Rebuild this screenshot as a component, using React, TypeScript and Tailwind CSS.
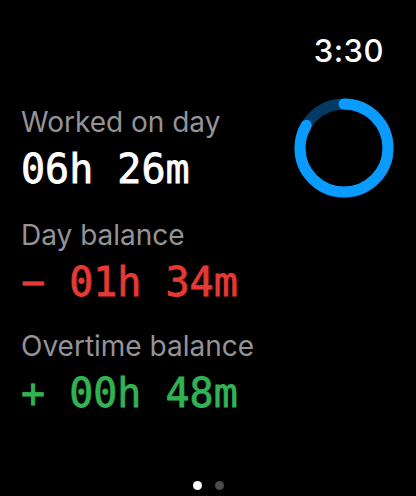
import React from "react";

function Ring() {
  const r = 44;
  const c = 2 * Math.PI * r;
  const p = 0.835;
  return (
    <svg width="100" height="100" viewBox="0 0 100 100">
      <circle cx="50" cy="50" r={r} fill="none" stroke="#053a63" strokeWidth="11" />
      <circle
        cx="50"
        cy="50"
        r={r}
        fill="none"
        stroke="#0a9bff"
        strokeWidth="11"
        strokeLinecap="round"
        strokeDasharray={`${c * p} ${c}`}
        transform="rotate(-90 50 50)"
      />
    </svg>
  );
}

export default function App() {
  const mono = { fontFamily: '"DejaVu Sans Mono", monospace' };
  return (
    <div
      className="w-[416px] h-[496px] bg-black text-white flex flex-col relative overflow-hidden"
      style={{ fontFamily: 'Inter, "Noto Sans", sans-serif' }}
    >
      <div className="flex justify-end pr-[32px] pt-[33px] h-[72px]">
        <span className="text-[31px] leading-[36px] font-medium tracking-[0.5px]">3:30</span>
      </div>
      <div className="flex">
        <div className="flex flex-col pl-[21px] flex-1">
          <div className="flex flex-col mt-[34px]">
            <span className="text-[28px] leading-[32px] text-[#939398]">Worked on day</span>
            <span className="text-[40px] leading-[44px] mt-[9px] [-webkit-text-stroke:0.8px_currentColor]" style={mono}>06h 26m</span>
          </div>
          <div className="flex flex-col mt-[28px]">
            <span className="text-[28px] leading-[32px] text-[#939398]">Day balance</span>
            <span className="text-[40px] leading-[44px] mt-[9px] text-[#e53935] [-webkit-text-stroke:0.8px_currentColor]" style={mono}>− 01h 34m</span>
          </div>
          <div className="flex flex-col mt-[26px]">
            <span className="text-[28px] leading-[32px] text-[#939398]">Overtime balance</span>
            <span className="text-[40px] leading-[44px] mt-[9px] text-[#32b353] [-webkit-text-stroke:0.8px_currentColor]" style={mono}>+ 00h 48m</span>
          </div>
        </div>
        <div className="pr-[22px] pt-[26px]">
          <Ring />
        </div>
      </div>
      <div className="absolute bottom-[6px] left-0 right-0 flex justify-center gap-[13px]">
        <div className="w-[9px] h-[9px] rounded-full bg-white" />
        <div className="w-[9px] h-[9px] rounded-full bg-[#4a4a4a]" />
      </div>
    </div>
  );
}
